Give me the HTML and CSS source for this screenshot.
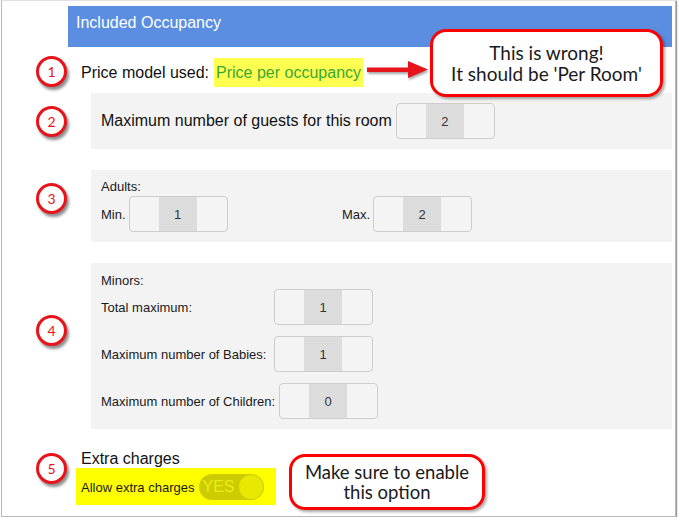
FILE: index.html
```html
<!DOCTYPE html>
<html>
<head>
<meta charset="utf-8">
<link rel="stylesheet" href="styles.css">
</head>
<body>
<div class="frame">
  <div class="main">
    <div class="header">Included Occupancy</div>
    <div class="price-row">
      <span>Price model used:</span>
      <span class="hl-price">Price per occupancy</span>
    </div>
    <div class="panel panel-guests">
      <span class="lbl-lg">Maximum number of guests for this room</span>
      <div class="spinner"><span class="side"></span><span class="val">2</span><span class="side"></span></div>
    </div>
    <div class="panel panel-adults">
      <div class="lbl">Adults:</div>
      <div class="adult-grid">
        <div class="field"><span class="lbl">Min.</span><div class="spinner"><span class="side"></span><span class="val">1</span><span class="side"></span></div></div>
        <div class="field"><span class="lbl">Max.</span><div class="spinner"><span class="side"></span><span class="val">2</span><span class="side"></span></div></div>
      </div>
    </div>
    <div class="panel panel-minors">
      <div class="lbl">Minors:</div>
      <div class="minor-row"><span class="lbl minor-lbl">Total maximum:</span><div class="spinner"><span class="side"></span><span class="val">1</span><span class="side"></span></div></div>
      <div class="minor-row"><span class="lbl minor-lbl">Maximum number of Babies:</span><div class="spinner"><span class="side"></span><span class="val">1</span><span class="side"></span></div></div>
      <div class="minor-row"><span class="lbl minor-lbl">Maximum number of Children:</span><div class="spinner"><span class="side"></span><span class="val">0</span><span class="side"></span></div></div>
    </div>
    <div class="extra-title">Extra charges</div>
    <div class="extra-hl">
      <span class="lbl">Allow extra charges</span>
      <div class="toggle"><span class="toggle-text">YES</span><span class="knob"></span></div>
    </div>
  </div>

  <div class="badge b1">1</div>
  <div class="badge b2">2</div>
  <div class="badge b3">3</div>
  <div class="badge b4">4</div>
  <div class="badge b5">5</div>

  <svg class="arrow" width="64" height="20" viewBox="0 0 64 20">
    <rect x="1" y="7.5" width="43" height="4.5" fill="#e8141b"/>
    <polygon points="42,1 62,9.5 42,18" fill="#e8141b"/>
  </svg>

  <div class="callout c1">This is wrong!<br>It should be 'Per Room'</div>
  <div class="callout c2">Make sure to enable<br>this option</div>
</div>
</body>
</html>
```
FILE: styles.css
```css
* { box-sizing: border-box; }
body {
  margin: 0;
  font-family: "Liberation Sans", Arial, sans-serif;
  color: #222;
  background: #fff;
}
.frame {
  position: relative;
  margin-left: 1px;
  width: 675px;
  height: 517px;
  border: 1px solid #b9b9b9;
  border-top-color: #e2e2e2;
  box-shadow: 1px 1px 1px #9a9a9a;
}
.main {
  padding: 5px 3px 0 66px;
}
.header {
  height: 41px;
  background: #5b8ee1;
  color: #fff;
  font-size: 16px;
  line-height: 18px;
  padding: 8px 8px 0;
}
.price-row {
  display: flex;
  align-items: center;
  gap: 5px;
  margin-top: 11px;
  padding-left: 13px;
  font-size: 16px;
  line-height: 19px;
  color: #111;
}
.hl-price {
  background: #ffff52;
  color: #3aa935;
  padding: 5px 2px;
}
.panel {
  margin-left: 23px;
  background: #f3f3f3;
  padding: 10px;
}
.lbl {
  font-size: 13px;
  line-height: 15px;
  color: #1a1a1a;
}
.lbl-lg {
  font-size: 16px;
  line-height: 18px;
  color: #111;
}
.panel-guests {
  margin-top: 6px;
  display: flex;
  align-items: center;
  gap: 4px;
}
.spinner {
  display: flex;
  width: 99px;
  height: 36px;
  border: 1px solid #cdcdcd;
  border-radius: 4px;
  background: #f4f4f4;
  overflow: hidden;
}
.spinner .side { width: 29px; }
.spinner .side:last-child { flex: 1; }
.spinner .val {
  width: 38px;
  background: #dcdcdc;
  display: flex;
  align-items: center;
  justify-content: center;
  font-size: 13px;
  color: #333;
}
.panel-adults {
  margin-top: 21px;
  padding: 9px 10px 10px;
}
.adult-grid {
  margin-top: 2px;
  display: grid;
  grid-template-columns: 241px auto;
}
.field {
  display: flex;
  align-items: center;
  gap: 3px;
}
.panel-minors {
  margin-top: 21px;
  padding: 10px;
}
.minor-row {
  display: flex;
  align-items: center;
  margin-top: 11px;
}
.panel-minors .lbl + .minor-row { margin-top: 1px; }
.minor-lbl {
  min-width: 169px;
  margin-right: 4px;
}
.extra-title {
  margin-top: 21px;
  padding-left: 13px;
  font-size: 16px;
  line-height: 18px;
  color: #111;
}
.extra-hl {
  display: inline-flex;
  align-items: center;
  gap: 5px;
  margin-left: 8px;
  padding: 6px 12px 5px 5px;
  background: #ffff00;
}
.toggle {
  position: relative;
  width: 65px;
  height: 26px;
  border-radius: 13px;
  background: #cccc00;
  display: flex;
  align-items: center;
}
.toggle-text {
  padding-left: 3px;
  font-size: 16px;
  color: #eded1a;
}
.knob {
  position: absolute;
  right: 1px;
  top: 1px;
  width: 24px;
  height: 24px;
  border-radius: 50%;
  background: #e8e800;
}
.badge {
  position: absolute;
  left: 34px;
  width: 31px;
  height: 31px;
  border: 3px solid #e8141b;
  border-radius: 50%;
  background: #fff;
  box-shadow: 2px 3px 3px rgba(0,0,0,0.45);
  color: #e8141b;
  font-family: Lato, "Open Sans", sans-serif;
  font-size: 14px;
  display: flex;
  align-items: center;
  justify-content: center;
}
.b1 { top: 55px; }
.b2 { top: 105px; }
.b3 { top: 182px; }
.b4 { top: 314px; }
.b5 { top: 452px; }
.arrow {
  position: absolute;
  left: 364px;
  top: 59px;
  filter: drop-shadow(1px 2px 1px rgba(0,0,0,0.35));
}
.callout {
  position: absolute;
  border: 3px solid #ff0000;
  border-radius: 16px;
  background: #fff;
  box-shadow: 2px 2px 3px rgba(0,0,0,0.35);
  font-family: Lato, "Open Sans", sans-serif;
  color: #1a1a1a;
  text-align: center;
  display: flex;
  align-items: center;
  justify-content: center;
}
.c1 {
  left: 428px;
  top: 28px;
  width: 233px;
  height: 68px;
  font-size: 19px;
  line-height: 21px;
}
.c2 {
  left: 287px;
  top: 453px;
  width: 196px;
  height: 56px;
  font-size: 18.5px;
  line-height: 20px;
}
```
